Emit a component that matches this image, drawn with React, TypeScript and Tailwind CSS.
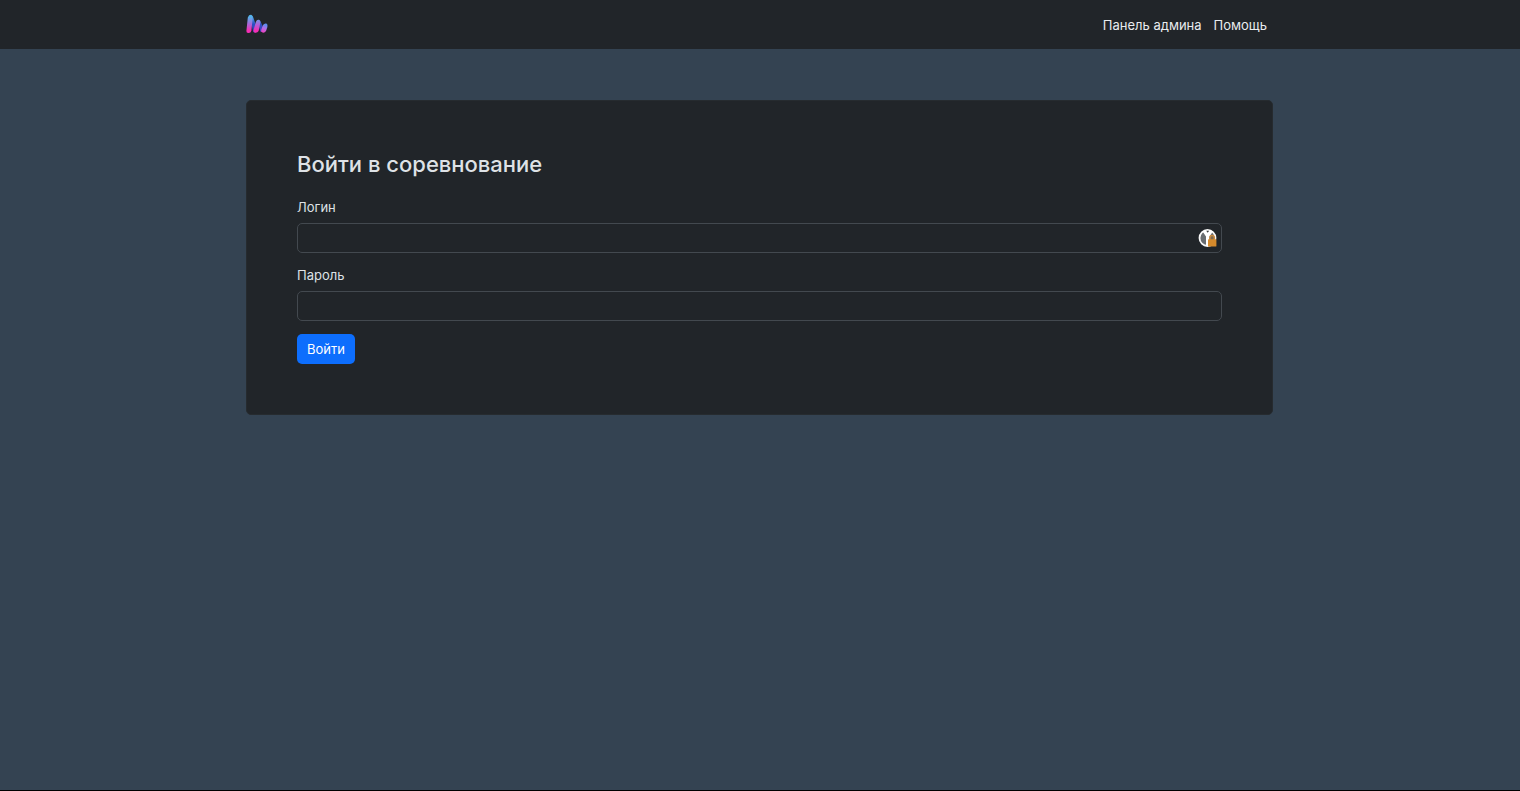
import { useId } from 'react';

function Logo() {
  const id = useId();
  return (
    <svg viewBox="0 0 22 20" className="h-5 w-[22px]" aria-hidden="true">
      <defs>
        <linearGradient id={`${id}a`} gradientUnits="userSpaceOnUse" x1="0" y1="1" x2="0" y2="19">
          <stop offset="0.1" stopColor="#55b4ea" />
          <stop offset="0.5" stopColor="#a868d8" />
          <stop offset="0.85" stopColor="#f52fb4" />
        </linearGradient>
        <linearGradient id={`${id}b`} gradientUnits="userSpaceOnUse" x1="0" y1="1" x2="0" y2="19">
          <stop offset="0.1" stopColor="#4aa3ea" />
          <stop offset="0.5" stopColor="#2a50c0" />
          <stop offset="1" stopColor="#4a3cc0" />
        </linearGradient>
        <linearGradient id={`${id}c`} gradientUnits="userSpaceOnUse" x1="20" y1="10" x2="16" y2="18">
          <stop offset="0.1" stopColor="#5f8df0" />
          <stop offset="0.5" stopColor="#b070e8" />
          <stop offset="1" stopColor="#f040c0" />
        </linearGradient>
      </defs>
      <path d="M3.4 1.2Q6.6.2 7.4 3.8L11.6 16.2Q10.4 19.4 7.2 18Z" fill={`url(#${id}b)`} />
      <path d="M11.6 6.2Q14.2 5.6 14.8 8L18.4 16.2Q16.6 18.8 14.2 17.4Z" fill={`url(#${id}b)`} />
      <path d="M1.8 3.4Q2.8.4 5.2.8 7 1.6 6.6 5L5.4 16.8Q4.8 19.2 2.2 19 .3 19 .4 17Z" fill={`url(#${id}a)`} />
      <path d="M9.8 8Q10.8 5.2 13 5.8 14.8 6.6 14.2 9.4L12.6 17Q11.6 19 9.2 18.8 7.2 18.4 7.6 16Z" fill={`url(#${id}a)`} />
      <path d="M17 11Q18.4 9 20.4 9.6 22 10.6 21.4 13L20 17Q18.8 19 16.6 18.6 14.6 18 15.2 16Z" fill={`url(#${id}c)`} />
    </svg>
  );
}

function KeyLockIcon() {
  return (
    <svg viewBox="0 0 20 20" className="size-5" aria-hidden="true">
      <circle cx="9.5" cy="10" r="8" fill="#686c70" stroke="#f8f8f8" strokeWidth="1.8" />
      <path d="M4.6 3.5 8 8.6V17.5H11.4V8.6L15 3.5 12 2 9.6 4.2 7.4 2Z" fill="#ffffff" />
      <path d="M8.4 2.8H11L9.7 4.8Z" fill="#3a3d40" />
      <path d="M11.9 11.6V9.8a2.2 2.2 0 0 1 4.4 0v1.8" fill="#7d6a50" stroke="#c98a40" strokeWidth="1.5" />
      <rect x="10" y="11.2" width="8.4" height="7.4" rx="0.6" fill="#d58a2c" />
    </svg>
  );
}

const inputClass =
  'block h-[30px] w-full rounded-[5px] border border-[#43494f] bg-[#212529] px-2.5 text-[#dee2e6] outline-none focus:border-[#86b7fe]';

export default function App() {
  return (
    <div className="flex min-h-screen flex-col border-b border-black bg-[#344352] font-['Inter','Liberation_Sans',sans-serif] text-[13px] leading-5 text-[#dee2e6]">
      <header className="bg-[#212529] pr-px pb-px">
        <nav className="mx-auto flex h-12 w-full max-w-[1027px] items-center justify-between">
          <a href="#" aria-label="Главная">
            <Logo />
          </a>
          <div className="flex gap-3 pt-0.5 pr-1.5 text-[#e9ecef]">
            <a href="#admin">Панель админа</a>
            <a href="#help">Помощь</a>
          </div>
        </nav>
      </header>

      <div className="pt-[51px] pr-px">
        <main className="mx-auto w-full max-w-[1027px] rounded-[5px] border border-[#262b2f] bg-[#212529] p-[50px]">
          <h1 className="mb-5 text-[22px] leading-[26px] font-medium">Войти в соревнование</h1>
          <form onSubmit={(e) => e.preventDefault()}>
            <label htmlFor="login" className="mb-1.5 block">
              Логин
            </label>
            <div className="relative mb-3">
              <input id="login" type="text" className={inputClass} />
              <span className="pointer-events-none absolute inset-y-0 right-1 flex items-center">
                <KeyLockIcon />
              </span>
            </div>
            <label htmlFor="password" className="mb-1.5 block">
              Пароль
            </label>
            <input id="password" type="password" className={inputClass} />
            <button
              type="submit"
              className="mt-[13px] block h-[30px] rounded-[5px] bg-[#0d6efd] px-2.5 text-white"
            >
              Войти
            </button>
          </form>
        </main>
      </div>
    </div>
  );
}
